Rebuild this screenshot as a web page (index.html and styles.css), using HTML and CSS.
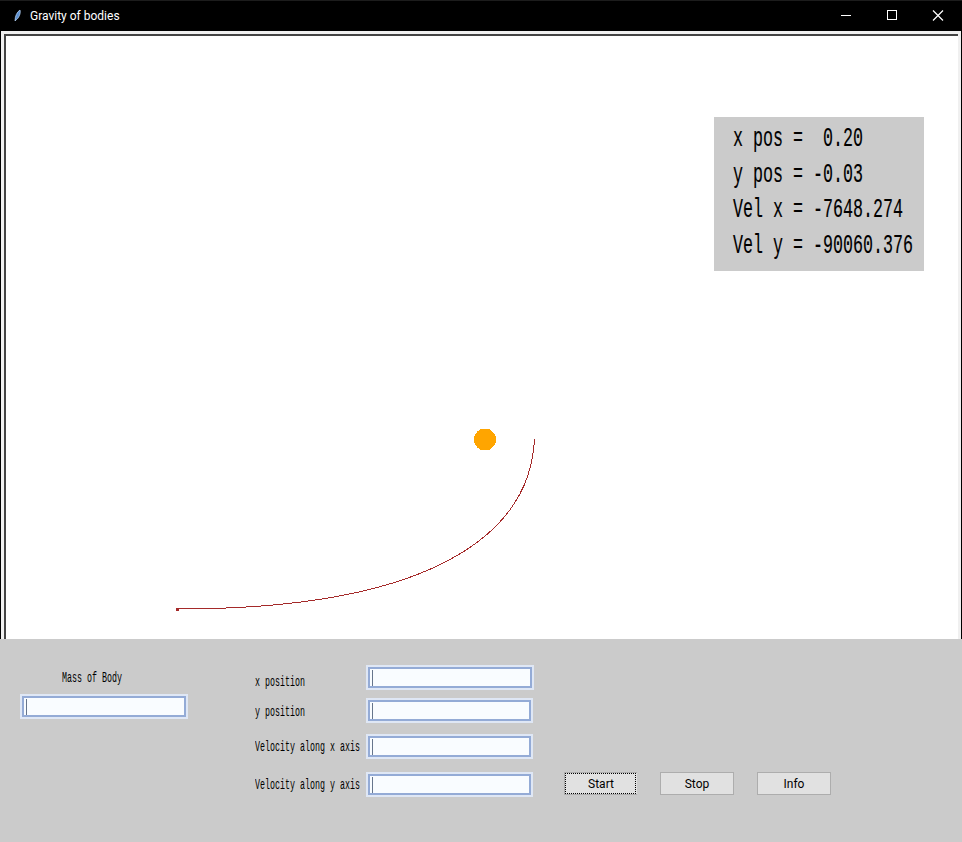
FILE: index.html
```html
<!DOCTYPE HTML>
<html lang="en-US">
<head>
	<meta charset="UTF-8">
	<title>Gravity of bodies</title>
	<link rel="stylesheet" href="styles.css">
</head>
<body>
	<div class="titlebar">
		<svg class="feather" width="16" height="16" viewBox="0 0 16 16">
			<path d="M5 13 C5 8 7 4 10 2 C11 5 9 10 6 12 Z" fill="#5b8fd0" stroke="#bcd6f5" stroke-width="0.7"/>
		</svg>
		<span class="title">Gravity of bodies</span>
		<div class="winbtns">
			<svg width="46" height="31" viewBox="0 0 46 31"><path d="M18 15.5H28" stroke="#fff" fill="none"/></svg>
			<svg width="46" height="31" viewBox="0 0 46 31"><rect x="18.5" y="10.5" width="9" height="9" stroke="#fff" fill="none"/></svg>
			<svg width="46" height="31" viewBox="0 0 46 31"><path d="M18 10.5L28 20.5M28 10.5L18 20.5" stroke="#fff" stroke-width="1.2" fill="none"/></svg>
		</div>
	</div>

	<div class="canvas">
		<div class="surface">
			<svg class="orbit" width="952" height="603" viewBox="6 36 952 603">
				<path d="M534.5 439 C530 535 430 609 178 609" fill="none" stroke="#a52a2a" stroke-width="1"/>
				<rect x="176" y="608" width="3" height="3" fill="#a52a2a"/>
				<circle cx="485" cy="439.5" r="11" fill="#ffa500"/>
			</svg>
			<div class="readout">
				<div class="readline"><span>x pos =&nbsp;&nbsp;0.20</span></div>
				<div class="readline"><span>y pos = -0.03</span></div>
				<div class="readline"><span>Vel x = -7648.274</span></div>
				<div class="readline"><span>Vel y = -90060.376</span></div>
			</div>
		</div>
	</div>

	<div class="controls">
		<div class="masscol">
			<div class="lbl masslbl"><span>Mass of Body</span></div>
			<input class="entry wide" type="text">
		</div>
		<div class="fields">
			<div class="row row1"><div class="lbl rowlbl"><span>x position</span></div><input class="entry wide" type="text"></div>
			<div class="row row2"><div class="lbl rowlbl"><span>y position</span></div><input class="entry" type="text"></div>
			<div class="row row3"><div class="lbl rowlbl"><span>Velocity along x axis</span></div><input class="entry" type="text"></div>
			<div class="row row4"><div class="lbl rowlbl"><span>Velocity along y axis</span></div><input class="entry" type="text"></div>
		</div>
		<div class="buttons">
			<button class="btn focused" type="button">Start</button>
			<button class="btn" type="button">Stop</button>
			<button class="btn" type="button">Info</button>
		</div>
	</div>
</body>
</html>
```
FILE: styles.css
```css
/* ventana */
html, body {
margin: 0;
padding: 0;
}
body {
width: 962px;
height: 842px;
overflow: hidden;
background: #cbcbcb;
font-family: "Liberation Mono", monospace;
color: #000;
}

/* barra de titulo */
.titlebar {
display: flex;
align-items: center;
height: 31px;
background: #000;
box-shadow: inset 0 1px 0 #1c1c1c;
}
.feather {
margin-left: 10px;
}
.title {
margin-left: 4px;
padding-top: 1px;
font-family: Roboto, "Liberation Sans", sans-serif;
font-size: 12px;
color: #fff;
}
.winbtns {
display: flex;
margin-left: auto;
margin-right: 1px;
}

/* lienzo */
.canvas {
box-sizing: border-box;
display: flex;
height: 608px;
padding: 3px 3px 0 3px;
background: #f0f0f0;
border-left: 1px solid #000;
border-right: 1px solid #000;
}
.surface {
position: relative;
flex: 1;
background: #fff;
border-top: 2px solid #444;
border-left: 2px solid #444;
}
.orbit {
position: absolute;
left: 0;
top: 0;
shape-rendering: crispEdges;
}
.readout {
position: absolute;
left: 708px;
top: 81px;
box-sizing: border-box;
width: 210px;
height: 154px;
padding: 5px 0 0 19px;
background: #cbcbcb;
}
.readline {
height: 35.67px;
line-height: 35.67px;
font-size: 27px;
white-space: nowrap;
}
/* la caja se queda en el ancho visible, el texto se estrecha con scaleX */
.readline span {
display: inline-block;
width: 180px;
transform: scaleX(0.617);
transform-origin: left center;
-webkit-text-stroke: 0.15px #000;
}

/* panel de controles */
.controls {
display: flex;
height: 203px;
}
.lbl {
font-size: 14px;
white-space: nowrap;
}
.lbl span {
display: inline-block;
width: 106px;
transform: scaleX(0.595);
transform-origin: left center;
}
.masscol {
margin: 32px 0 0 20px;
width: 168px;
}
.masslbl {
height: 23px;
padding-left: 42px;
line-height: 14px;
}
.fields {
margin: 26px 0 0 67px;
}
.row {
display: flex;
align-items: center;
height: 25px;
}
.row2 {
margin-top: 8px;
}
.row3 {
margin-top: 11px;
}
.row4 {
margin-top: 13px;
}
.rowlbl {
width: 111px;
}
.row1 .rowlbl {
padding-top: 9px;
}
.row2 .rowlbl {
padding-top: 2px;
}
.row3 .rowlbl, .row4 .rowlbl {
padding-top: 1px;
}
.entry {
box-sizing: border-box;
width: 167px;
height: 25px;
margin: 0;
padding: 0;
border: 2px solid #dfe7f5;
outline: 2px solid #94abd6;
outline-offset: -4px;
border-radius: 0;
background: #f9fcff linear-gradient(#66758c, #66758c) no-repeat 4px 3px / 1px 16px;
}
.wide {
width: 168px;
}

/* botones */
.buttons {
display: flex;
gap: 23px;
margin: 133px 0 0 30px;
}
.btn {
box-sizing: border-box;
width: 74px;
height: 23px;
padding: 0;
border: 1px solid #adadad;
border-radius: 0;
background: #e1e1e1;
font-family: Roboto, "Liberation Sans", sans-serif;
font-size: 12px;
color: #000;
}
.focused {
width: 73px;
border-right: 0;
outline: 1px dotted #000;
outline-offset: -2px;
}
```
